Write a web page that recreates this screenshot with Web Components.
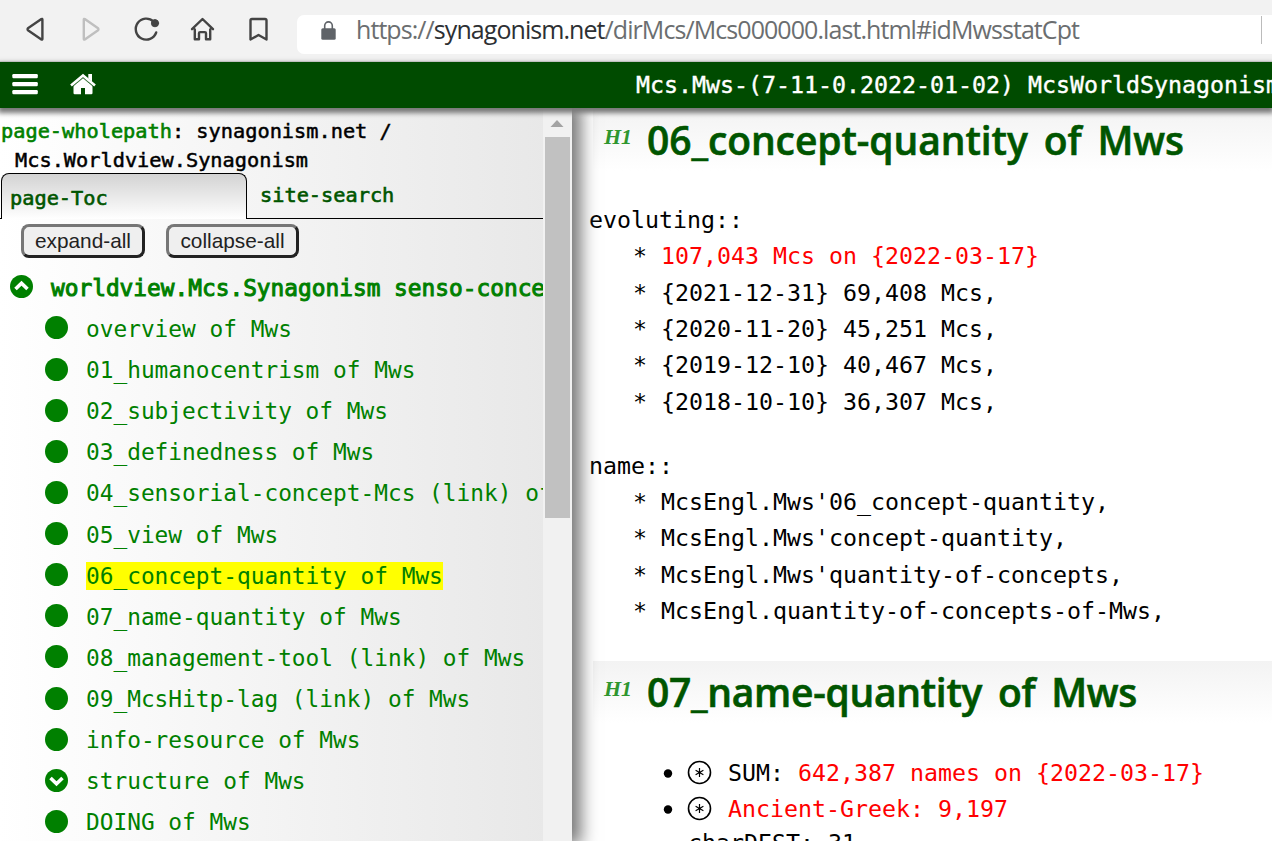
<!DOCTYPE html>
<html lang="en">
<head>
<meta charset="utf-8">
<title>Mcs.Mws</title>
<style>
html,body{margin:0;height:100%;overflow:hidden;background:#fff}
</style>
</head>
<body>
<mws-page></mws-page>
<script>
const define = (name, html, after) => customElements.define(name, class extends HTMLElement {
  connectedCallback() {
    if (this.shadowRoot) return;
    const t = document.createElement('template');
    t.innerHTML = typeof html === 'function' ? html(this) : html;
    this.attachShadow({mode: 'open'}).appendChild(t.content.cloneNode(true));
    if (after) after(this);
  }
});

/* Text spaced out to fill a given width */
define('fit-text', '<style>:host{display:inline-block;white-space:pre}span{display:inline-block}</style><span><slot></slot></span>', el => {
  const s = el.shadowRoot.querySelector('span');
  const n = el.textContent.length;
  const w = s.getBoundingClientRect().width;
  s.style.letterSpacing = ((+el.getAttribute('w') - w) / n) + 'px';
});

define('browser-bar', `<style>
:host{display:flex;height:62px;background:#f2f2f2;flex:none;box-sizing:border-box;border-bottom:1px solid #dcdfdc}
.icons{width:297px;flex:none}
.addr{flex:1;margin:15px 0 7px;height:39px;background:#fff;border-radius:7px 0 0 7px;display:flex;align-items:center;font:25px/31px "Open Sans","Noto Sans",sans-serif;color:#6b6e70}
.lock{margin:-8px 0 0 24px;width:15px;height:19px;flex:none}
fit-text{margin-left:20px;height:31px;margin-top:-11px}
b{font-weight:400;color:#2d3033}
i{margin-left:auto;margin-right:10px;width:1px;height:28px;margin-top:-9px;background:#bbb}
</style>
<svg class="icons" width="297" height="61" fill="none" stroke="#444" stroke-width="2.4" stroke-linejoin="round" stroke-linecap="round">
<path d="M42.4 19.5V39q0 1-1 .4L28.3 30.5q-1.5-1.3 0-2.6L41.4 19q1-.5 1 .5Z"/>
<path stroke="#bfbfbf" d="M83.8 19.5V39q0 1 1 .4L97.7 30.5q1.5-1.3 0-2.6L84.8 19q-1-.5-1 .5Z"/>
<path d="M153.5 21.5A10.5 10.5 0 1 0 156.2 32.5"/><circle cx="155" cy="23.200" r="3.600" fill="#444" stroke-width="1"/>
<path d="M192 29.2 202.5 19 213 29.2M194.8 29.5v9.8h4.2v-6q0-1.2 1.2-1.2h4.600q1.200 0 1.200 1.200v6h4.200v-9.800"/>
<path d="M252 19h13q1.500 0 1.500 1.500v19l-8-4.500-8 4.500v-19q0-1.500 1.500-1.500Z"/>
</svg>
<div class="addr"><svg class="lock" viewBox="0 0 15 19"><rect x=".3" y="7.300" width="14.400" height="11.500" rx="1.500" fill="#5f6368"/><path d="M3.700 8V4.700a3.800 3.800 0 0 1 7.600 0V8" fill="none" stroke="#5f6368" stroke-width="1.600"/></svg><fit-text w="723">https://<b>synagonism.net</b>/dirMcs/Mcs000000.last.html#idMwsstatCpt</fit-text><i></i></div>`);

define('site-header', `<style>
:host{display:flex;height:46px;flex:none;background:#004b00;box-shadow:0 3px 5px 2px #777;z-index:5;position:relative}
svg{flex:none;width:636px}
div{font:23.25px/46px "DejaVu Sans Mono",monospace;color:#fff;-webkit-text-stroke:.4px #fff;white-space:pre;overflow:hidden}
</style><svg width="636" height="46" fill="#fff"><rect x="12.300" y="12" width="25.500" height="4.200" rx="1.200"/><rect x="12.300" y="20" width="25.500" height="4.200" rx="1.200"/><rect x="12.300" y="28" width="25.500" height="4.200" rx="1.200"/>
<path d="M83 15.500 92.500 23.400V31q0 1.200-1.200 1.200H85V26h-4v6.200h-6.300q-1.200 0-1.200-1.200v-7.600Z"/><path d="M71 23.500 83 13.400 95 23.500" fill="none" stroke="#fff" stroke-width="2.600"/><path d="M72.600 24.600 83 15.900 93.400 24.600" fill="none" stroke="#004b00" stroke-width=".7"/><path d="M88.300 12H92v7.500l-3.700-3Z"/></svg><div>Mcs.Mws-(7-11-0.2022-01-02) McsWorldSynagonism</div>`);

define('toc-row', el => {
  const root = el.hasAttribute('root'), k = el.getAttribute('kind');
  const arrow = k === 'up' ? '<path d="M5.500 14 11.500 8.200 17.500 14" stroke="#fff" stroke-width="3.600" fill="none"/>' : k === 'down' ? '<path d="M5.500 9 11.500 14.800 17.500 9" stroke="#fff" stroke-width="3.600" fill="none"/>' : '';
  return `<style>
:host{display:flex;height:41.130px;align-items:center;padding-left:${root ? 10 : 45}px;font:22.800px/28px "DejaVu Sans Mono",monospace;color:#008000;white-space:pre;box-sizing:border-box}
svg{flex:none;margin-right:18px;margin-top:-2px}
span{height:28px;${el.hasAttribute('on') ? 'background:#ff0;' : ''}${root ? '-webkit-text-stroke:1px #008000;' : ''}}
</style><svg width="23" height="23"><circle cx="11.500" cy="11.500" r="11.500" fill="#008000"/>${arrow}</svg><span><slot></slot></span>`;
});

define('side-panel', `<style>
:host{display:flex;width:572px;flex:none;position:relative;z-index:2;background:linear-gradient(to right,#fff,#e7e7e7);box-shadow:5px 0 16px 4px #777}
.main{width:543px;overflow:hidden;flex:none;font:20.300px/29px "DejaVu Sans Mono",monospace}
.path{padding:9px 0 0 1px;height:56px;white-space:pre;color:#000;-webkit-text-stroke:.5px #000}
.path div+div{padding-left:14px}
.path b,.tabs{font-weight:400;color:#008000;-webkit-text-stroke:.6px #008000}
.tabs{display:flex;height:46px;box-sizing:border-box;border-bottom:1px solid #000;color:#005500;-webkit-text-stroke-color:#005500}
.tab{box-sizing:border-box;width:246px;height:46px;margin-left:1px;border:1px solid #000;border-bottom:0;border-radius:8px 8px 0 0;background:linear-gradient(#d3d3d3,#fff);padding:10px 0 0 8px}
.other{padding:8px 0 0 13px}
.btns{display:flex;gap:21px;padding:5px 0 0 21px;height:48.300px;box-sizing:border-box}
.btns span{box-sizing:border-box;height:34px;border:3px solid;border-color:#767676 #222 #222 #767676;border-radius:8px;background:#efefef;font:20.800px/28px "Liberation Sans",Arial,sans-serif;color:#222;text-align:center;width:124px}
.btns span+span{width:133px}
.sb{width:29px;background:#f1f1f1;display:flex;flex-direction:column;align-items:center;flex:none}
.sb svg{height:29px;flex:none}
.sb i{width:25px;height:381px;background:#c1c1c1;margin-right:1px}
</style>
<div class="main"><div class="path"><div><b>page-wholepath</b>: synagonism.net /</div><div>Mcs.Worldview.Synagonism</div></div>
<div class="tabs"><div class="tab">page-Toc</div><div class="other">site-search</div></div>
<div class="btns"><span>expand-all</span><span>collapse-all</span></div>
<toc-row root kind="up">worldview.Mcs.Synagonism senso-concept</toc-row>
<toc-row>overview of Mws</toc-row>
<toc-row>01_humanocentrism of Mws</toc-row>
<toc-row>02_subjectivity of Mws</toc-row>
<toc-row>03_definedness of Mws</toc-row>
<toc-row>04_sensorial-concept-Mcs (link) of Mws</toc-row>
<toc-row>05_view of Mws</toc-row>
<toc-row on>06_concept-quantity of Mws</toc-row>
<toc-row>07_name-quantity of Mws</toc-row>
<toc-row>08_management-tool (link) of Mws</toc-row>
<toc-row>09_McsHitp-lag (link) of Mws</toc-row>
<toc-row>info-resource of Mws</toc-row>
<toc-row kind="down">structure of Mws</toc-row>
<toc-row>DOING of Mws</toc-row></div>
<div class="sb"><svg width="29" height="29"><path d="M7.500 19 14 12 20.500 19Z" fill="#a3a3a3"/></svg><i></i></div>`);

define('section-title', el => `<style>
:host{display:flex;box-sizing:border-box;height:62px;margin-left:21px;background:linear-gradient(#f3f3f3,#fff);color:#005500;font:600 39px/61px "Open Sans","Noto Sans",sans-serif}
i{font:italic bold 22px/56px "Liberation Serif",serif;color:#2f962f;width:43px;margin-left:11px;flex:none}
fit-text{-webkit-text-stroke:.600px #005500;word-spacing:6px}
</style><i>H1</i><fit-text w="${el.getAttribute('w')}">${el.textContent}</fit-text>`);

define('text-line', `<style>
:host{display:block;height:36.350px;font:23.250px/36.400px "DejaVu Sans Mono",monospace;color:#000;white-space:pre;padding-left:17px}
:host([in]){padding-left:61px}
:host([li]){padding-left:116px;margin-top:-2px}
::slotted(b){font-weight:400;color:#f00}
</style><slot></slot>`);

define('list-line', `<style>
:host{display:flex;align-items:center;height:36.200px;padding-left:91px;font:23.250px/36.400px "DejaVu Sans Mono",monospace;white-space:pre}
svg{flex:none;width:65px}
::slotted(b){font-weight:400;color:#f00}
</style><svg width="65" height="30" fill="none" stroke="#000" stroke-width="1.600"><circle cx="5" cy="15.500" r="4.200" fill="#000" stroke="none"/><circle cx="36.500" cy="14.500" r="11"/><path d="M36.500 10v9M32.600 12.300l7.800 4.500M40.400 12.300l-7.800 4.500" stroke-width="1.200"/></svg><slot></slot>`);

define('content-pane', `<style>
:host{display:block;flex:1;min-width:0;overflow:hidden;background:#fff}
.a{margin-top:1px}.b{margin-top:31px}.c{margin-top:27.700px}.d{margin-top:31.400px}.e{margin-top:31.800px}
</style>
<section-title class="a" w="537">06_concept-quantity of Mws</section-title>
<text-line class="b">evoluting::</text-line>
<text-line in>* <b>107,043 Mcs on {2022-03-17}</b></text-line>
<text-line in>* {2021-12-31} 69,408 Mcs,</text-line>
<text-line in>* {2020-11-20} 45,251 Mcs,</text-line>
<text-line in>* {2019-12-10} 40,467 Mcs,</text-line>
<text-line in>* {2018-10-10} 36,307 Mcs,</text-line>
<text-line class="c">name::</text-line>
<text-line in>* McsEngl.Mws'06_concept-quantity,</text-line>
<text-line in>* McsEngl.Mws'concept-quantity,</text-line>
<text-line in>* McsEngl.Mws'quantity-of-concepts,</text-line>
<text-line in>* McsEngl.quantity-of-concepts-of-Mws,</text-line>
<section-title class="d" w="490">07_name-quantity of Mws</section-title>
<list-line class="e">SUM: <b>642,387 names on {2022-03-17}</b></list-line>
<list-line><b>Ancient-Greek: 9,197</b></list-line>
<text-line li>charDEST: 31</text-line>`);

define('mws-page', `<style>
:host{display:flex;flex-direction:column;width:1272px;height:841px;overflow:hidden}
.row{display:flex;flex:1;min-height:0}
</style><browser-bar></browser-bar><site-header></site-header><div class="row"><side-panel></side-panel><content-pane></content-pane></div>`);
</script>
</body>
</html>
